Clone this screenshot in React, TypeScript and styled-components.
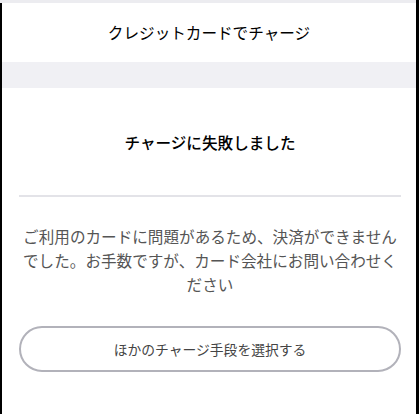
import React from "react";
import styled, { createGlobalStyle } from "styled-components";

const Global = createGlobalStyle`
  html, body { margin: 0; padding: 0; background: #000; }
  body {
    font-family: "Noto Sans CJK JP", "Noto Sans", sans-serif;
    -webkit-font-smoothing: antialiased;
  }
`;

const Page = styled.div`
  width: 414px;
  height: 414px;
  margin-left: 2px;
  background: #fff;
  display: flex;
  flex-direction: column;
`;

const TopLine = styled.div`
  height: 3px;
  margin-left: -2px;
  background: #ececf0;
`;

const Header = styled.header`
  height: 59px;
  display: flex;
  align-items: center;
  justify-content: center;
  font-size: 15.6px;
  font-weight: 400;
  color: #000;
  padding-bottom: 1px;
  box-sizing: border-box;
`;

const Band = styled.div`
  height: 26px;
  background: #f0f0f4;
`;

const Content = styled.main`
  display: flex;
  flex-direction: column;
  align-items: stretch;
  padding: 0 15px 0 17px;
`;

const Title = styled.h1`
  margin: 0;
  height: 109px;
  display: flex;
  align-items: center;
  justify-content: center;
  font-size: 15.6px;
  font-weight: 500;
  color: #000;
  border-bottom: 2px solid #e3e3e8;
  box-sizing: border-box;
`;

const Message = styled.p`
  margin: 27px 0 0;
  text-align: center;
  font-size: 15.6px;
  line-height: 24px;
  color: #555;
`;

const Button = styled.button`
  margin-top: 30px;
  height: 46px;
  border: 2px solid #b2b2ba;
  border-radius: 23px;
  background: #fff;
  font-family: inherit;
  font-size: 13.8px;
  color: #444;
  display: flex;
  align-items: center;
  justify-content: center;
  cursor: pointer;
`;

export default function App() {
  return (
    <>
      <Global />
      <Page>
        <TopLine />
        <Header>クレジットカードでチャージ</Header>
        <Band />
        <Content>
          <Title>チャージに失敗しました</Title>
          <Message>
            ご利用のカードに問題があるため、決済ができませんでした。お手数ですが、カード会社にお問い合わせください
          </Message>
          <Button>ほかのチャージ手段を選択する</Button>
        </Content>
      </Page>
    </>
  );
}
